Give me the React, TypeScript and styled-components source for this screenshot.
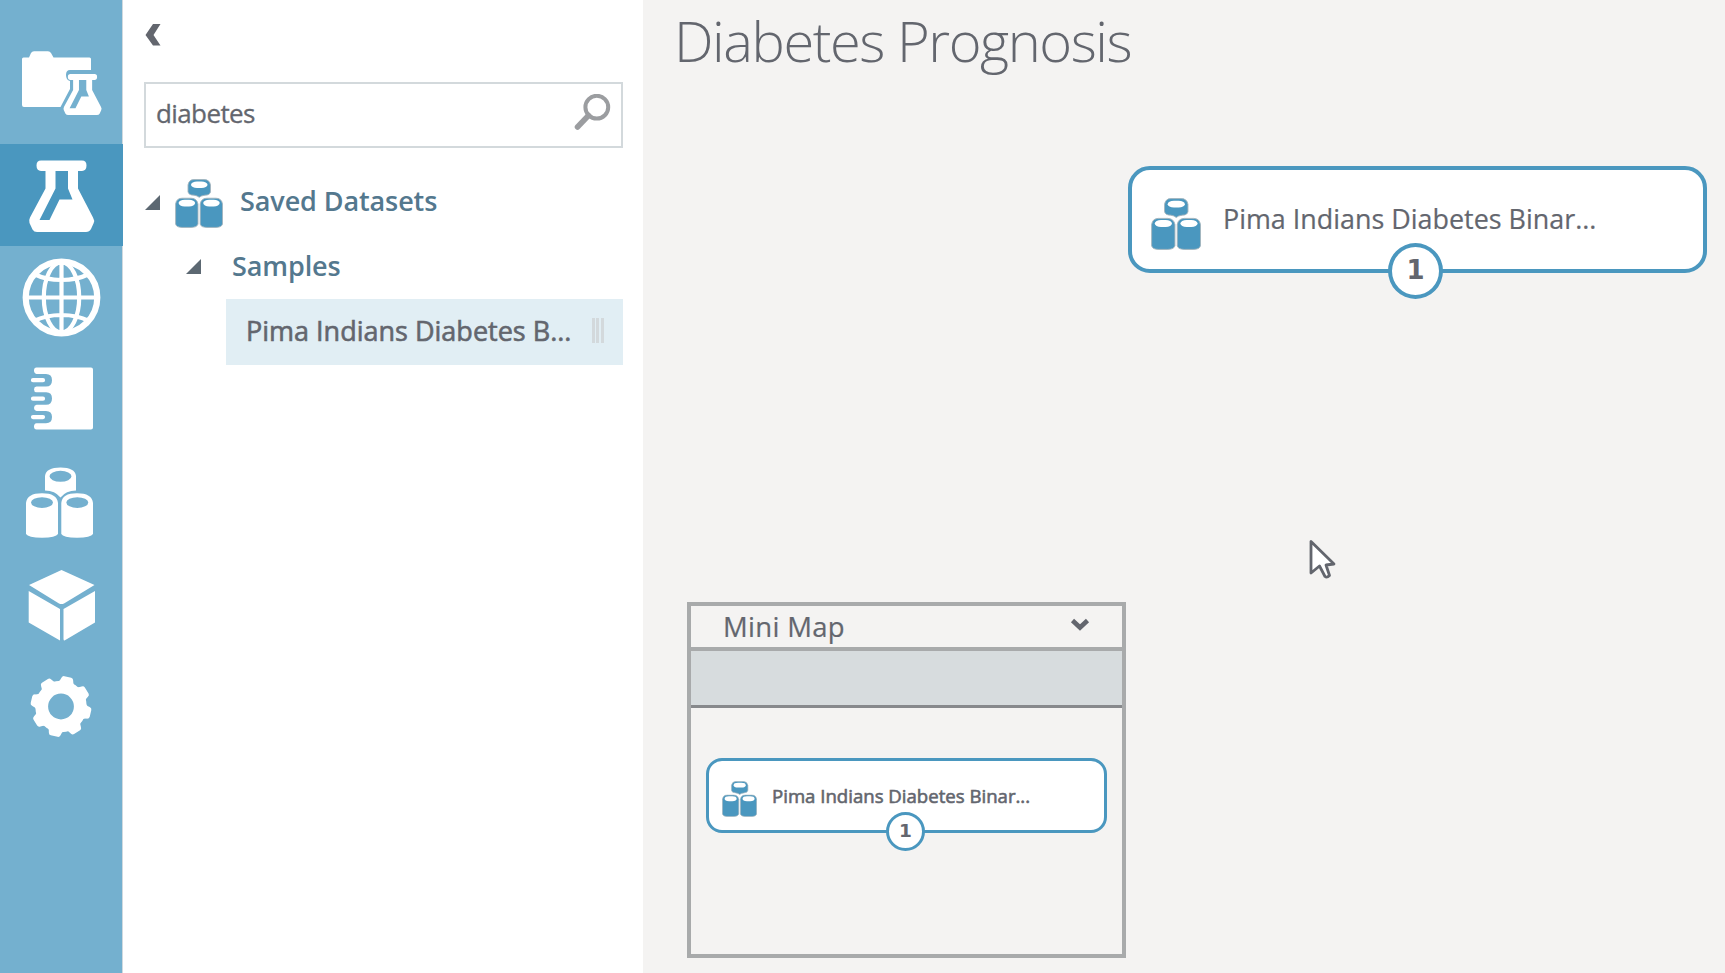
import React from 'react';
import styled, { createGlobalStyle, css } from 'styled-components';

const colors = {
  rail: '#74b0cf',
  accent: '#4a97bf',
  canvas: '#f4f3f2',
  text: '#63666e',
  heading: '#54788e',
  line: '#d3d9dc',
  frame: '#a8aaab',
  selected: '#e1eef4',
};

const GlobalStyle = createGlobalStyle`
  * { box-sizing: border-box; }
  body { margin: 0; background: ${colors.canvas}; overflow: hidden; }
`;

const Workspace = styled.div`
  display: flex;
  width: 1725px;
  height: 973px;
  overflow: hidden;
  font-family: 'Open Sans', 'Noto Sans', sans-serif;
  color: ${colors.text};
  background: ${colors.canvas};
`;

const Rail = styled.nav`
  display: flex;
  flex-direction: column;
  flex: none;
  width: 123px;
  padding-top: 41px;
  background: ${colors.rail};
  border-right: 1px solid #cfd9df;
`;

const RailItem = styled.a<{ $active?: boolean }>`
  display: block;
  flex: none;
  height: 102.5px;
  margin-right: -1px;
  color: #fff;
  ${(p) => p.$active && css`background: ${colors.accent};`}
  svg { display: block; overflow: visible; }
`;

const Panel = styled.aside`
  display: flex;
  flex-direction: column;
  flex: none;
  width: 520px;
  padding: 24px 20px 0 21px;
  background: #fff;
`;

const CollapseButton = styled.button`
  display: flex;
  width: 17px;
  height: 23px;
  padding: 0;
  border: 0;
  background: none;
`;

const SearchBox = styled.div`
  display: flex;
  align-items: center;
  justify-content: space-between;
  height: 66px;
  margin-top: 35px;
  padding: 0 10px 5px 10px;
  border: 2px solid ${colors.line};
  font-size: 26px;
  line-height: 36px;
  letter-spacing: -0.6px;
  -webkit-text-stroke: 0.3px ${colors.text};
`;

const TreeRow = styled.div<{ $level: number }>`
  display: flex;
  align-items: center;
  padding-left: ${(p) => (p.$level ? 42 : 1)}px;
  height: ${(p) => (p.$level ? 66 : 59)}px;
  margin-top: ${(p) => (p.$level ? 0 : 26)}px;
`;

const Twisty = styled.svg<{ $raised?: boolean }>`
  flex: none;
  width: 15px;
  height: 15px;
  margin-bottom: ${(p) => (p.$raised ? 2 : 0)}px;
`;

const TreeIcon = styled.span`
  display: flex;
  margin: 0 17px 0 15px;
`;

const TreeLabel = styled.span<{ $indent?: number }>`
  margin-left: ${(p) => p.$indent ?? 0}px;
  font-size: 27px;
  line-height: 36px;
  font-weight: 600;
  letter-spacing: -0.1px;
  color: ${colors.heading};
  padding-bottom: ${(p) => (p.$indent ? 1 : 5)}px;
`;

const DatasetRow = styled.div`
  display: flex;
  align-items: center;
  justify-content: space-between;
  height: 66px;
  margin-left: 82px;
  padding: 0 19px 3px 20px;
  background: ${colors.selected};
  font-size: 27px;
  line-height: 36px;
  -webkit-text-stroke: 0.6px ${colors.text};
`;

const Grip = styled.span`
  width: 12px;
  height: 25px;
  background: repeating-linear-gradient(90deg, ${colors.line} 0 3px, transparent 3px 4.5px);
`;

const Canvas = styled.main`
  position: relative;
  flex: 1;
  padding: 0 0 0 31px;
`;

const Title = styled.h1`
  margin: 0;
  font-size: 56px;
  line-height: 80px;
  font-weight: 300;
  letter-spacing: -1.45px;
  white-space: nowrap;
`;

const NodeCard = styled.div<{ $mini?: boolean }>`
  position: relative;
  display: flex;
  align-items: center;
  background: #fff;
  border: ${(p) => (p.$mini ? 3 : 4)}px solid ${colors.accent};
  white-space: nowrap;
  ${(p) =>
    p.$mini
      ? css`
          width: 401px;
          height: 75px;
          padding: 0 0 0 13px;
          border-radius: 16px;
          font-size: 18.6px;
          -webkit-text-stroke: 0.6px ${colors.text};
        `
      : css`
          width: 579px;
          height: 107px;
          padding: 0 0 0 19px;
          border-radius: 22px;
          font-size: 26.9px;
          -webkit-text-stroke: 0.2px ${colors.text};
        `}
`;

const NodeIcon = styled.span<{ $mini?: boolean }>`
  display: flex;
  margin-top: ${(p) => (p.$mini ? 7 : 9)}px;
  margin-right: ${(p) => (p.$mini ? 15 : 22)}px;
`;

const NodeName = styled.span`
  line-height: 1.36;
`;

const Port = styled.span<{ $mini?: boolean }>`
  position: absolute;
  display: flex;
  align-items: center;
  justify-content: center;
  left: ${(p) => (p.$mini ? 177 : 256)}px;
  top: ${(p) => (p.$mini ? 51 : 73)}px;
  width: ${(p) => (p.$mini ? 39 : 55)}px;
  height: ${(p) => (p.$mini ? 39 : 56)}px;
  padding-bottom: ${(p) => (p.$mini ? 1 : 3)}px;
  border: ${(p) => (p.$mini ? 3 : 4)}px solid ${colors.accent};
  border-radius: 50%;
  background: #fff;
  font-family: 'DejaVu Sans', sans-serif;
  font-size: ${(p) => (p.$mini ? 18.5 : 26)}px;
  line-height: 1;
  font-weight: 700;
  -webkit-text-stroke: 0;
`;

const NodePlacement = styled.div`
  position: absolute;
  left: 485px;
  top: 166px;
`;

const MiniMap = styled.section`
  position: absolute;
  left: 44px;
  top: 602px;
  display: flex;
  flex-direction: column;
  width: 439px;
  height: 356px;
  border: 4px solid ${colors.frame};
  background: ${colors.canvas};
`;

const MiniMapHeader = styled.header`
  display: flex;
  align-items: center;
  justify-content: space-between;
  height: 45px;
  padding: 0 32px 0 32px;
  border-bottom: 4px solid ${colors.frame};
  font-size: 27.5px;
  line-height: 36px;
  letter-spacing: 0.3px;
  -webkit-text-stroke: 0.2px ${colors.text};
  svg { margin-bottom: 5px; }
`;

const MiniMapBand = styled.div`
  height: 57px;
  background: #d7dcde;
  border-bottom: 3px solid #87898c;
`;

const MiniMapBody = styled.div`
  flex: 1;
  padding: 50px 0 0 15px;
`;

const Pointer = styled.svg`
  position: absolute;
  left: 665px;
  top: 538px;
`;

interface DatasetGlyphProps {
  width: number;
  height: number;
}

const DatasetGlyph = ({ width, height }: DatasetGlyphProps) => (
  <svg width={width} height={height} viewBox="0 0 48 50" preserveAspectRatio="none">
    <g fill={colors.accent} stroke="#a3b4bd" strokeWidth="0.9">
      <path d="M13 6Q14 .6 19 .6H29Q34.500.6 35.500 6V13Q35 16.500 30 16.500 26 17 24.200 18.700 22.500 17 19 16.500 13.500 16.500 13 13Z" />
      <path d="M.6 25.500Q1.500 19.600 7 19.600H16Q21.800 19.600 23 25.500V46Q22 49.400 16 49.400H7Q1.500 49.400.6 46Z" />
      <path d="M25.200 25.500Q26.200 19.600 32 19.600H41Q46.500 19.600 47.500 25.500V46Q46.500 49.400 41 49.400H32Q26 49.400 25.200 46Z" />
    </g>
    <g fill="#fff">
      <rect x="16" y="2.600" width="16.500" height="6.600" rx="6" ry="3.300" />
      <rect x="3.600" y="21.200" width="16.500" height="6.800" rx="6" ry="3.400" />
      <rect x="28.200" y="21.200" width="16.500" height="6.800" rx="6" ry="3.400" />
    </g>
  </svg>
);

const FlaskShape = () => (
  <path
    fillRule="evenodd"
    d="M41 160H82Q86.500 160 86.500 165T82 170.500H78V188L93 217Q95 220 93.500 223L91 228.500Q89.500 231.500 86 231.500H37Q34 231.500 32.500 229L29.500 222.500Q28.500 220 30 217L45.500 188V170.500H41Q36.500 170 36.500 165T41 160ZM55.500 170.500V188L39.500 219.500H49.500L59.500 199H72.500L68 188V170.500Z"
  />
);

const RailGlyph = ({ top, children }: { top: number; children: React.ReactNode }) => (
  <svg width="122" height="102.5" viewBox={`0 ${top} 122 102.5`} fill="currentColor">
    {children}
  </svg>
);

const ProjectsGlyph = () => (
  <RailGlyph top={41}>
    <path d="M22 59Q22 57.500 23.500 57.500H29L31 53Q32 51.300 34 51.300H48Q50 51.300 51 53L53.500 57.500H89.500Q91 57.500 91 59V70H70Q66 70 66 75T70 81V89L60.500 107H24Q22 107 22 105Z" />
    <g transform="translate(46.5 -18) scale(.585 .575)">
      <FlaskShape />
    </g>
  </RailGlyph>
);

const GlobeGlyph = () => (
  <RailGlyph top={246}>
    <g fill="none" stroke="currentColor" strokeWidth="4.200">
      <circle cx="61.500" cy="297.500" r="35.800" strokeWidth="6.200" />
      <ellipse cx="61.500" cy="297.500" rx="17.700" ry="35" />
      <path d="M61.500 262V333M26 297.500H97M34 274Q46 280 61.500 280T89 274M34 321Q46 315 61.500 315T89 321" />
    </g>
  </RailGlyph>
);

const NotebookGlyph = () => (
  <RailGlyph top={348.5}>
    <path d="M36.500 367H91Q93 367 93 369V427Q93 429 91 429H36.500Q34 429 34 426T36.500 422.800H46Q52 422.800 52 416.600T46 410.400H36.500Q34 410 34 407.400T36.500 404.300H46Q52 404.300 52 398T46 391.800H36.500Q34 391.500 34 388.900T36.500 386H46Q52 386 52 379.700T46 373.400H36.500Q34 373 34 370T36.500 367Z" />
    <path d="M33 379.700H43M33 398.200H43M33 416.600H43" stroke="currentColor" strokeWidth="4.200" strokeLinecap="round" />
  </RailGlyph>
);

const DatasetsGlyph = () => (
  <RailGlyph top={451}>
    <path
      fillRule="evenodd"
      d="M45 476Q46 467.500 60.500 467.500T76 476V490.500Q66 490.500 60.500 497.500 55 490.500 45 490.500ZM49.500 476.300a11 5.500 0 1 0 22 0a11 5.500 0 1 0-22 0Z"
    />
    <path
      fillRule="evenodd"
      d="M26 503Q27 493.300 42 493.300T58 503V534Q56 537.700 42 537.700T26 534ZM31 502.600a11 5.300 0 1 0 22 0a11 5.300 0 1 0-22 0Z"
    />
    <path
      fillRule="evenodd"
      d="M61.300 503Q62 493.300 77 493.300T93 503V534Q91 537.700 77 537.700T61.300 534ZM66.300 502.600a11 5.300 0 1 0 22 0a11 5.300 0 1 0-22 0Z"
    />
  </RailGlyph>
);

const ModelGlyph = () => (
  <RailGlyph top={554}>
    <path d="M61.500 570 94.500 585 64 603.500Q61.500 604.500 59 603.500L29 585ZM28.700 591 60 609V640.500L28.700 622.500ZM63.500 609 95 591V622.500L64.500 640.500Q63.500 640.500 63.500 639Z" />
  </RailGlyph>
);

const SettingsGlyph = () => (
  <RailGlyph top={656.5}>
    <g transform="translate(61 707)">
      <circle r="19.300" fill="none" stroke="currentColor" strokeWidth="12.800" />
      {Array.from({ length: 8 }, (_, i) => (
        <path key={i} transform={`rotate(${13 + i * 45})`} d="M-8.500-23Q-6.500-25-6-28-5.500-30.300-3.500-30.300H3.500Q5.500-30.300 6-28 6.500-25 8.500-23Z" />
      ))}
    </g>
  </RailGlyph>
);

const Triangle = ({ raised }: { raised?: boolean }) => (
  <Twisty $raised={raised} viewBox="0 0 15 15">
    <path d="M15 0V15H0Z" fill="#5c6872" />
  </Twisty>
);

const SearchGlyph = () => (
  <svg width="37" height="37" viewBox="0 0 37 37" fill="none" stroke="#9b9da0">
    <circle cx="22.800" cy="13.200" r="11.400" strokeWidth="4" />
    <path d="M14.500 21.500 3.500 33" strokeWidth="5.500" strokeLinecap="round" />
  </svg>
);

const DatasetNode = ({ name, port, mini }: { name: string; port: number; mini?: boolean }) => (
  <NodeCard $mini={mini}>
    <NodeIcon $mini={mini}>
      <DatasetGlyph width={mini ? 35 : 50} height={mini ? 36 : 52} />
    </NodeIcon>
    <NodeName>{name}</NodeName>
    <Port $mini={mini}>{port}</Port>
  </NodeCard>
);

const App = () => (
  <Workspace>
    <GlobalStyle />
    <Rail>
      <RailItem><ProjectsGlyph /></RailItem>
      <RailItem $active>
        <RailGlyph top={143.5}><FlaskShape /></RailGlyph>
      </RailItem>
      <RailItem><GlobeGlyph /></RailItem>
      <RailItem><NotebookGlyph /></RailItem>
      <RailItem><DatasetsGlyph /></RailItem>
      <RailItem><ModelGlyph /></RailItem>
      <RailItem><SettingsGlyph /></RailItem>
    </Rail>
    <Panel>
      <CollapseButton>
        <svg width="17" height="22" viewBox="0 0 17 22">
          <path d="M9 0H16.500L9.500 11 16.500 21.500H9L1.500 11Z" fill={colors.text} />
        </svg>
      </CollapseButton>
      <SearchBox>
        <span>diabetes</span>
        <SearchGlyph />
      </SearchBox>
      <TreeRow $level={0}>
        <Triangle raised />
        <TreeIcon><DatasetGlyph width={48} height={49} /></TreeIcon>
        <TreeLabel>Saved Datasets</TreeLabel>
      </TreeRow>
      <TreeRow $level={1}>
        <Triangle />
        <TreeLabel $indent={31}>Samples</TreeLabel>
      </TreeRow>
      <DatasetRow>
        <span>Pima Indians Diabetes B...</span>
        <Grip />
      </DatasetRow>
    </Panel>
    <Canvas>
      <Title>Diabetes Prognosis</Title>
      <NodePlacement>
        <DatasetNode name="Pima Indians Diabetes Binar..." port={1} />
      </NodePlacement>
      <MiniMap>
        <MiniMapHeader>
          <span>Mini Map</span>
          <svg width="20" height="13" viewBox="0 0 20 13">
            <path d="M2.500 2.500 10 9.500 17.500 2.500" fill="none" stroke={colors.text} strokeWidth="4.600" />
          </svg>
        </MiniMapHeader>
        <MiniMapBand />
        <MiniMapBody>
          <DatasetNode name="Pima Indians Diabetes Binar..." port={1} mini />
        </MiniMapBody>
      </MiniMap>
      <Pointer width="30" height="44" viewBox="0 0 30 44">
        <path d="M3 3.500V35L11.500 28 17 38.500Q19 40 21.500 37.500L18 27 26 26Z" fill="#fff" stroke={colors.text} strokeWidth="2.800" strokeLinejoin="round" />
      </Pointer>
    </Canvas>
  </Workspace>
);

export default App;
